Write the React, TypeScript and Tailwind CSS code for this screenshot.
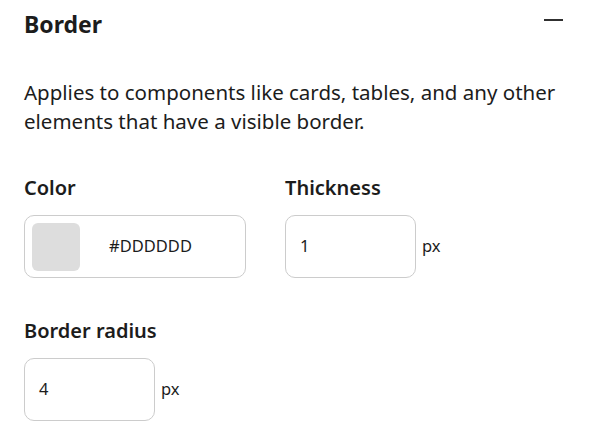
export default function App() {
  return (
    <div
      className="w-[594px] h-[444px] bg-white px-6 text-[#1c1c1c] overflow-hidden"
      style={{ fontFamily: '"Noto Sans", "Open Sans", sans-serif' }}
    >
      <div className="flex items-center justify-between h-[48px]">
        <h2 className="text-[23px] font-bold leading-none">Border</h2>
        <div className="w-[19px] h-[2px] bg-[#303030] mr-[7px] mb-[9px]" />
      </div>

      <p className="mt-[30px] text-[20.5px] leading-[29px]">
        Applies to components like cards, tables, and any other elements that
        have a visible border.
      </p>

      <div className="flex gap-[39px] mt-[39px]">
        <div className="flex flex-col">
          <label className="text-[20px] font-semibold leading-[26px]">Color</label>
          <div className="mt-[14px] flex items-center w-[222px] h-[63px] border border-[#cccccc] rounded-[10px] px-[7px]">
            <div className="w-[48px] h-[48px] rounded-[6px] bg-[#dddddd]" />
            <span className="ml-[29px] text-[16.5px]">#DDDDDD</span>
          </div>
        </div>
        <div className="flex flex-col">
          <label className="text-[20px] font-semibold leading-[26px]">Thickness</label>
          <div className="mt-[14px] flex items-center">
            <div className="flex items-center w-[131px] h-[63px] border border-[#cccccc] rounded-[10px] px-[14px] text-[16.5px]">
              1
            </div>
            <span className="ml-[6px] text-[16.5px]">px</span>
          </div>
        </div>
      </div>

      <div className="flex flex-col mt-[40px]">
        <label className="text-[20px] font-semibold leading-[26px]">Border radius</label>
        <div className="mt-[14px] flex items-center">
          <div className="flex items-center w-[131px] h-[63px] border border-[#cccccc] rounded-[10px] px-[14px] text-[16.5px]">
            4
          </div>
          <span className="ml-[6px] text-[16.5px]">px</span>
        </div>
      </div>
    </div>
  );
}
